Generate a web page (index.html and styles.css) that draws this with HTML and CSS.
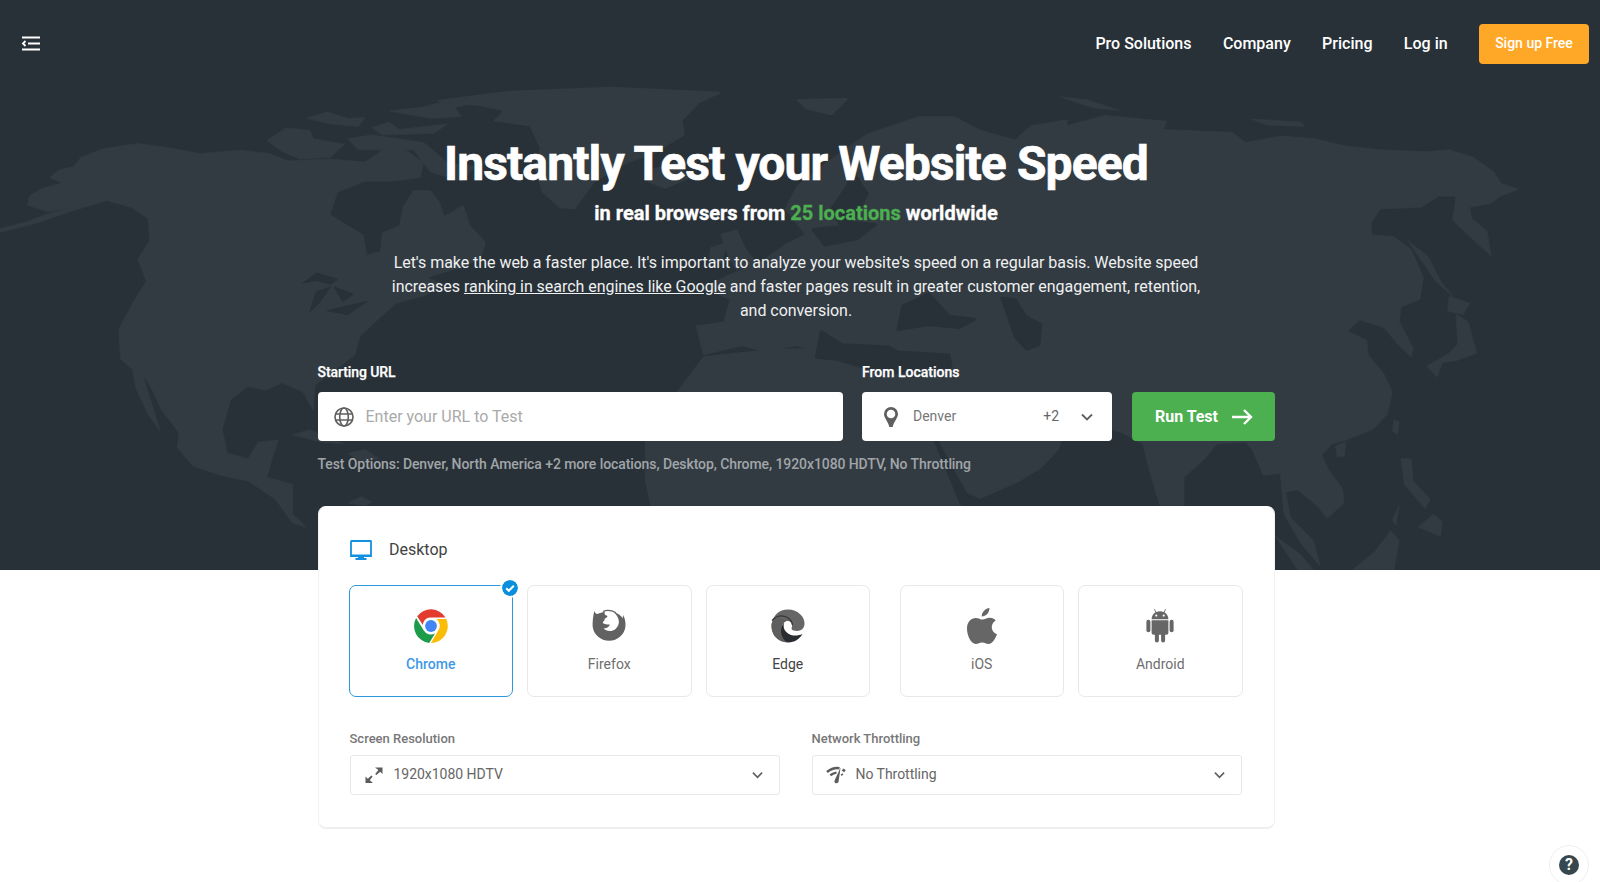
FILE: index.html
```
<!DOCTYPE html>
<html lang="en">
<head>
<meta charset="utf-8">
<title>Instantly Test your Website Speed</title>
<link rel="stylesheet" href="styles.css">
</head>
<body>
<div class="hero">
  <svg class="map" viewBox="0 0 1600 570" aria-hidden="true">
    <!-- North and Central America -->
    <g transform="scale(.3444 .3699)">
      <path class="land" d="M0 618L75 600L150 575L205 560L140 572L80 555L85 530L120 510L180 495L145 480L170 460L215 450L235 425L300 402L400 388L480 398L580 415L700 406L780 415L840 435L960 430L1060 438L1120 400L1170 400L1230 440L1220 480L1140 490L1060 490L980 520L958 580L1010 610L1055 635L1065 690L1105 680L1110 630L1160 610L1170 560L1200 515L1250 515L1275 545L1290 585L1345 555L1365 610L1410 655L1395 700L1330 725L1240 750L1290 770L1230 800L1150 820L1090 870L1045 910L1030 960L960 1010L915 1040L910 1110L880 1060L820 1035L770 1055L720 1045L670 1080L645 1160L660 1225L720 1240L750 1195L808 1190L790 1240L775 1290L850 1310L850 1390L890 1425L850 1415L800 1350L720 1300L640 1285L560 1260L515 1210L520 1170L470 1110L440 1050L415 1015L440 1090L465 1165L430 1120L395 1050L385 1000L350 970L345 890L385 820L425 760L400 700L435 650L430 590L380 560L310 542L210 570L100 605L0 628Z"/>
      <path class="land" d="M775 380L830 346L900 352L910 375L1000 390L960 425L870 430L820 410ZM890 320L950 303L1010 320L1060 318L1040 342L960 335ZM1080 345L1130 330L1160 350L1300 335L1260 360L1110 365ZM1010 375L1080 365L1230 385L1300 440L1380 450L1340 490L1250 465L1200 405L1040 405ZM1225 290L1350 262L1500 245L1440 270L1320 290L1340 315L1250 320L1130 300Z"/>
      <path class="land" d="M850 1175L900 1162L1000 1200L930 1195ZM1010 1225L1060 1215L1100 1240L1050 1250ZM1010 1360L1050 1342L1080 1358L1060 1367Z"/>
      <path class="water" d="M880 765L920 738L980 755L960 768L920 758ZM900 842L918 790L960 775L925 820ZM970 775L1025 795L995 815ZM950 840L1065 815L1010 850Z"/>
    </g>
    <!-- Greenland, Iceland, Europe, Africa, Arabia -->
    <g transform="scale(1.0204)">
      <path class="land" d="M430 99L500 90L600 86L705 91L685 100L668 118L670 132L640 150L612 160L582 178L563 204L549 203L532 188L525 165L530 145L520 123L485 118L495 108L470 103Z"/>
      <path class="land" d="M782 98L830 97L815 112L790 106ZM634 168L662 160L675 174L652 184L636 178ZM707 230L722 226L730 244L741 258L722 264L714 250ZM697 243L711 239L707 257L695 258Z"/>
      <path class="land" d="M770 205L782 182L810 160L850 132L900 115L935 115L960 128L995 138L1010 124L1045 118L1045 415L1037 440L1020 458L997 472L960 488L948 482L925 440L905 400L876 370L855 356L820 350L780 338L750 344L727 338L690 347L683 320L710 316L716 293L690 282L715 270L745 258L770 240L790 230Z"/>
      <path class="land" d="M690 350L755 343L805 342L825 355L880 366L905 410L940 495L955 504L640 504L633 470L633 430L660 390Z"/>
      <path class="water" d="M815 205L832 180L830 160L850 190L835 218L858 220L840 234L808 240L797 225L825 222ZM885 300L910 288L930 310L955 313L940 321L910 318L880 323ZM982 292L995 294L1005 310L1020 318L1018 338L1006 342L995 330ZM805 325L825 338L870 340L880 345L930 348L932 360L870 366L820 352L800 350Z"/>
    </g>
    <!-- Asia and the Pacific -->
    <g transform="translate(1060) scale(.3444 .3699)">
      <path class="land" d="M0 262L80 270L170 298L100 292ZM555 322L700 330L710 342L600 338ZM0 345L130 312L310 328L300 350L500 358L540 385L640 368L740 375L830 395L930 405L1060 410L1130 405L1200 425L1260 465L1280 495L1330 512L1280 530L1250 550L1190 560L1195 590L1240 625L1252 692L1190 640L1140 595L1150 530L1100 530L1050 560L930 565L905 600L905 635L970 640L1020 675L1055 750L1045 810L990 830L985 870L1025 940L1020 965L980 930L940 885L870 865L835 895L890 920L895 960L940 1010L965 1060L950 1120L910 1160L830 1190L790 1200L760 1230L780 1270L820 1320L825 1360L775 1402L750 1370L690 1325L655 1330L670 1400L735 1460L755 1530L700 1470L650 1390L640 1280L590 1285L560 1220L540 1195L455 1200L420 1240L360 1290L360 1367L290 1367L265 1290L240 1200L180 1170L0 1120Z"/>
      <path class="land" d="M1010 650L1070 695L1105 760L1140 800L1090 760ZM1130 800L1190 820L1170 850L1125 840ZM1150 850L1185 870L1210 955L1150 975L1110 980L1095 1020L1065 990L1130 955L1155 930ZM970 1135L985 1140L980 1175L965 1165ZM800 1205L830 1195L825 1235L805 1235ZM990 1240L1020 1240L1025 1300L1075 1350L1060 1375L1000 1310ZM1040 1425L1085 1390L1110 1410L1105 1450ZM625 1450L700 1500L735 1540L690 1540ZM850 1540L915 1490L960 1435L985 1460L970 1540ZM965 1405L985 1365L975 1420Z"/>
    </g>
  </svg>

  <header class="topbar">
    <svg class="menu-icon" viewBox="0 0 20 16"><path d="M1 1.500h18M7 7.500h12M1 13.500h18M4.500 5L2 7.500L4.500 10"/></svg>
    <nav class="nav">
      <a class="nav-link">Pro Solutions</a>
      <a class="nav-link">Company</a>
      <a class="nav-link">Pricing</a>
      <a class="nav-link">Log in</a>
      <a class="signup">Sign up Free</a>
    </nav>
  </header>

  <main class="intro">
    <h1 class="title">Instantly Test your Website Speed</h1>
    <h2 class="subtitle">in real browsers from <span class="green">25 locations</span> worldwide</h2>
    <p class="lead">Let's make the web a faster place. It's important to analyze your website's speed on a regular basis. Website speed<br>increases <a class="lead-link">ranking in search engines like Google</a> and faster pages result in greater customer engagement, retention,<br>and conversion.</p>
  </main>

  <form class="test-form">
    <div class="field field-url">
      <span class="label">Starting URL</span>
      <div class="box url-box">
        <svg class="globe" viewBox="0 0 20 20"><circle cx="10" cy="10" r="9"/><ellipse cx="10" cy="10" rx="4.300" ry="9"/><path d="M1.500 7h17M1.500 13h17"/></svg>
        <span class="placeholder">Enter your URL to Test</span>
      </div>
    </div>
    <div class="field field-loc">
      <span class="label label-loc">From Locations</span>
      <div class="box loc-box">
        <svg class="pin" viewBox="0 0 14 20"><path fill-rule="evenodd" d="M7 0a7 7 0 0 1 7 7c0 4-4.500 8-5.300 13H5.300C4.500 15 0 11 0 7a7 7 0 0 1 7-7Zm0 2.700a4.300 4.300 0 1 0 0 8.600a4.300 4.300 0 0 0 0-8.600Z"/></svg>
        <span class="city">Denver</span>
        <span class="more">+2</span>
        <svg class="chevron" viewBox="0 0 12 8"><path d="M1 1.500l5 5l5-5"/></svg>
      </div>
    </div>
    <div class="run">Run Test
      <svg class="arrow" viewBox="0 0 22 16"><path d="M1 8h19M13 1l7 7l-7 7"/></svg>
    </div>
  </form>
  <p class="summary">Test Options: Denver, North America +2 more locations, Desktop, Chrome, 1920x1080 HDTV, No Throttling</p>
</div>

<section class="card">
  <div class="card-head">
    <svg class="monitor" viewBox="0 0 22 20"><path class="monitor-line" d="M1.500 1h19a.5.5 0 0 1 .5.500V16H1V1.500a.5.5 0 0 1 .5-.5Z"/><path class="monitor-fill" d="M1 14.500h20v2.300H1ZM8 16.500h6v1.500h2.500V20h-11v-2H8Z"/></svg>
    <span>Desktop</span>
  </div>
  <div class="tiles">
    <div class="tile tile-on">
      <svg class="badge" viewBox="0 0 16 16"><circle cx="8" cy="8" r="8" fill="#0a8fdc"/><path d="M4.200 8.200l2.600 2.600l5-5" fill="none" stroke="#fff" stroke-width="2"/></svg>
      <svg class="logo" viewBox="0 0 34 34">
        <path fill="#e33b2e" d="M3.200 7.200A17 17 0 0 1 31.500 8.500H17A8.500 8.500 0 0 0 9.100 13.900L8.800 16Z"/>
        <path fill="#1c9b48" d="M2.100 8.900A17 17 0 0 0 15.200 33.900L21 24.500A8.500 8.500 0 0 1 9.600 21.300Z"/>
        <path fill="#fbbc05" d="M32.300 10A17 17 0 0 1 16.900 34L24.400 21.300A8.500 8.500 0 0 0 22.500 10Z"/>
        <circle cx="17" cy="17" r="7.400" fill="#fff"/><circle cx="17" cy="17" r="5.900" fill="#4285f4"/>
      </svg>
      <span>Chrome</span>
    </div>
    <div class="tile">
      <svg class="logo" viewBox="0 0 34 34"><path fill="#626262" d="M2.300 2C3 4 4 4.800 5.500 5C8 3.500 10 4 13 2.500C12 4.500 12.600 6 14.500 6.600C16.500 7.300 15 8.800 12.600 9.700C13 11.200 12 12 10.700 13C11 15.500 14 15 18 15.800C17 17.500 15 19.800 11.500 19.500C14 22.500 20 23 23.500 20C28.500 15.500 28 9 22 3.500C26 4 29.500 7 30.700 9.500L31 6C33 9 33.700 13 33.500 17A16.500 16 0 0 1 .6 17C.5 12 1.200 6.500 2.300 2Z"/><path fill="none" stroke="#626262" stroke-width="1.200" d="M11 2.500Q17 -.2 24 3.800"/></svg>
      <span>Firefox</span>
    </div>
    <div class="tile tile-edge">
      <svg class="logo" viewBox="0 0 34 34"><path fill="#666" d="M.5 16C2 6 8 .5 17 .5C27 .5 34 8 33.500 15C33.200 21 28 23 22.500 21.500C19.500 20.500 21 19 21 16.500C21 13 18.500 11.500 15.500 12C11 13 9 18 12 24C8 31 12 32 14 33C5 31 0 25 .5 16Z"/><path fill="#5e5e5e" d="M.5 15C2 9 10 7 15.500 12C9 14 8 24 17 33.500C7 34 0 25 .5 15Z"/><path fill="#292d31" d="M13.500 13C11 18 14 24 20 26C24 27 28 26.500 31.500 25C28 31 22 34 16 33.300C9 29 8 18 13.500 13Z"/><path d="M1 11.500Q8 4 16.500 8.500Q21 11.500 21.500 16" fill="none" stroke="#353638" stroke-width="1.300"/></svg>
      <span>Edge</span>
    </div>
    <div class="tile tile-ios">
      <svg class="logo logo-apple" viewBox="0 0 30 36"><path fill="#666" d="M22.400 0C22.700 4.500 18.900 8.400 14.800 8.500C14.400 4.500 18.200.5 22.400 0ZM28.700 12.400C22.600 16.200 24 23.900 30 26.200C28.200 31 25 36 21.500 36C18.700 36 18.100 34.400 15.200 34.400C12.200 34.400 11.300 36 8.800 36C4 36 0 27.500 0 20.500C0 13.700 4.300 9.900 8.700 9.900C11.600 9.900 13.600 11.600 15.500 11.600C17.300 11.600 19.700 9.700 23 9.700C25.100 9.700 27.300 10.500 28.700 12.400Z"/></svg>
      <span>iOS</span>
    </div>
    <div class="tile">
      <svg class="logo logo-android" viewBox="0 0 28 34"><g fill="#666"><path d="M5.600 10.200C5.600 6.800 7.400 4.500 9.500 3.200L8 .5L8.600.1L10.300 2.900Q14 1.500 17.700 2.900L19.400.1L20 .5L18.500 3.200C20.600 4.500 22.400 6.800 22.400 10.200Z"/><path d="M5.600 11.300h16.800v12.400a2 2 0 0 1-2 2h-1.300v5.800a2 2 0 0 1-4 0v-5.800h-2.200v5.800a2 2 0 0 1-4 0v-5.800H7.600a2 2 0 0 1-2-2Z"/><rect x=".4" y="10.800" width="4" height="12.500" rx="2"/><rect x="23.600" y="10.800" width="4" height="12.500" rx="2"/></g><circle cx="10.300" cy="6.600" r="1.100" fill="#fff"/><circle cx="17.700" cy="6.600" r="1.100" fill="#fff"/></svg>
      <span>Android</span>
    </div>
  </div>
  <div class="options">
    <div class="option">
      <span class="option-label">Screen Resolution</span>
      <div class="select">
        <svg class="option-icon" viewBox="0 0 20 18"><path fill="#5c5c5c" d="M11 1.500h7.500v6.500L16.200 5.800L12.400 9L11.200 7.900L14.400 4ZM9 17H1.500v-6.500L3.800 12.700L7.400 9.500L8.600 10.600L5.800 14.300Z"/></svg>
        <span>1920x1080 HDTV</span>
        <svg class="chevron chevron-sm" viewBox="0 0 12 8"><path d="M1 1.500l5 5l5-5"/></svg>
      </div>
    </div>
    <div class="option">
      <span class="option-label">Network Throttling</span>
      <div class="select">
        <svg class="option-icon" viewBox="0 0 20 18"><g fill="none" stroke="#5c5c5c"><path stroke-width="2.600" d="M1 6Q7 1.200 13.500 2.200M16.500 3.600L19 5.200"/><path stroke-width="2.300" d="M4.300 9.300Q7.500 7 10.500 6.600M15.500 8L16.500 9.200"/></g><path fill="#5c5c5c" d="M14.600 1.500L12.500 16Q11 18.200 9 16.800Q8 15.600 8.800 14Z"/></svg>
        <span>No Throttling</span>
        <svg class="chevron chevron-sm" viewBox="0 0 12 8"><path d="M1 1.500l5 5l5-5"/></svg>
      </div>
    </div>
  </div>
</section>

<div class="help">
  <span class="help-dot">?</span>
</div>
</body>
</html>
```
FILE: styles.css
```
* { box-sizing: border-box; }
body { margin: 0; height: 882px; overflow: hidden; background: #fff; font-family: Roboto, "Liberation Sans", sans-serif; color: #666; }
h1, h2, p { margin: 0; }

.hero { position: relative; height: 570px; background: #293138; color: #fff; }
.map { position: absolute; inset: 0; width: 1600px; height: 570px; }
.land { fill: #333b42; stroke: #333b42; stroke-width: 2; stroke-linejoin: round; }
.water { fill: #293138; stroke: #293138; stroke-width: 3; stroke-linejoin: round; }
.topbar, .intro, .test-form, .summary { position: relative; }

.topbar { display: flex; justify-content: space-between; align-items: center; height: 88px; padding: 0 11px 0 21px; }
.menu-icon { width: 20px; height: 16px; fill: none; stroke: #fff; stroke-width: 1.9; }
.nav { display: flex; align-items: center; }
.nav-link { margin-right: 31.4px; padding-bottom: 1px; font-size: 16px; font-weight: 500; line-height: 20px; white-space: nowrap; }
.signup { width: 110px; height: 40px; border-radius: 4px; background: #ffa726; font-size: 14px; font-weight: 500; line-height: 38px; text-align: center; }

.intro { width: 960px; margin-left: 316px; padding-top: 44px; text-align: center; }
.title { font-size: 48px; font-weight: 700; line-height: 64px; letter-spacing: -.88px; -webkit-text-stroke: .7px #fff; white-space: nowrap; }
.subtitle { margin-top: 2px; font-size: 20px; font-weight: 700; line-height: 30px; -webkit-text-stroke: .3px; }
.green { color: #4caf50; }
.lead { margin-top: 23px; font-size: 16px; line-height: 24px; letter-spacing: -.04px; color: #eef0f1; white-space: nowrap; }
.lead-link { text-decoration: underline; }

.test-form { display: flex; align-items: flex-end; gap: 19.5px; margin: 39px 0 0 317.5px; width: 957px; }
.field { display: flex; flex-direction: column; gap: 10px; }
.field-url { width: 525px; }
.field-loc { width: 250px; }
.label { font-size: 14px; font-weight: 500; line-height: 20px; letter-spacing: -.08px; -webkit-text-stroke: .25px; }
.label-loc { letter-spacing: 0; }
.box { display: flex; align-items: center; height: 49px; border-radius: 4px; background: #fff; color: #666; }
.url-box { padding-left: 16px; }
.globe { width: 20px; height: 20px; fill: none; stroke: #5f5f5f; stroke-width: 1.6; }
.placeholder { margin-left: 12px; padding-bottom: 1px; font-size: 16px; color: #aaa; }
.loc-box { padding: 0 19px 0 22px; font-size: 14px; }
.pin { width: 14px; height: 20px; fill: #5f5f5f; }
.city { margin-left: 15px; padding-bottom: 2px; color: #777; }
.more { margin-left: auto; padding-bottom: 2px; }
.chevron { width: 12px; height: 8px; margin-left: 22px; fill: none; stroke: #5f5f5f; stroke-width: 1.8; }
.run { display: flex; align-items: center; justify-content: center; gap: 13px; flex: 1; height: 49px; padding-left: 2px; border-radius: 4px; background: #4caf50; font-size: 16px; font-weight: 700; letter-spacing: -.05px; }
.arrow { width: 22px; height: 16px; fill: none; stroke: #fff; stroke-width: 2.4; }
.summary { margin: 13px 0 0 317.500px; font-size: 14px; font-weight: 500; line-height: 20px; letter-spacing: -.085px; color: #a0a5a9; white-space: nowrap; }

.card { position: relative; width: 957px; height: 323px; margin: -64px 0 0 318px; padding: 31px 30px 0; border: 1px solid #f1f1f1; border-top-color: #fff; border-bottom: 2px solid #eee; border-radius: 8px; background: #fff; }
.card-head { display: flex; align-items: center; gap: 17px; height: 22px; padding-left: 1px; font-size: 16px; color: #424242; }
.monitor { width: 22px; height: 20px; margin-top: 1px; }
.monitor-line { fill: none; stroke: #1490e0; stroke-width: 1.8; }
.monitor-fill { fill: #1490e0; }
.tiles { display: flex; gap: 14px; margin-top: 25px; }
.tile { position: relative; display: flex; flex-direction: column; align-items: center; flex: 0 0 164.5px; height: 112px; padding-top: 23px; border: 1px solid #e8e8e8; border-radius: 7px; font-size: 14px; line-height: 20px; color: #6e6e6e; }
.tile-on { border-color: #2b98dc; color: #3f98e6; font-weight: 500; }
.tile-edge { color: #444; }
.tile-ios { margin-left: 15.5px; }
.badge { position: absolute; top: -6px; right: -6px; width: 16px; height: 16px; border-radius: 50%; box-shadow: 0 0 0 2px #fff; }
.logo { width: 34px; height: 34px; margin-bottom: 11px; }
.logo-apple { width: 30px; height: 36px; margin-top: -1px; margin-bottom: 10px; }
.logo-android { width: 28px; }
.tiles { margin-left: -.5px; }
.options { display: flex; gap: 32px; margin-top: 32px; padding-left: .5px; }
.option { width: 430px; }
.option-label { display: block; font-size: 13px; font-weight: 500; line-height: 20px; color: #777; }
.select { display: flex; align-items: center; height: 40px; margin-top: 6px; padding: 0 16px 2px 13px; border: 1px solid #e8e8e8; border-radius: 3px; font-size: 14px; letter-spacing: -.03px; }
.option-icon { width: 20px; height: 18px; margin-top: 1px; margin-right: 10px; }
.chevron-sm { width: 11px; height: 8px; margin-left: auto; margin-top: 2px; }

.help { position: fixed; left: 1549px; top: 845px; display: flex; align-items: center; justify-content: center; width: 40px; height: 40px; border: 1px solid #eee; border-radius: 50%; background: #fff; }
.help-dot { width: 20px; height: 20px; border-radius: 50%; background: #37474f; color: #fff; font-size: 16px; font-weight: 700; line-height: 20px; text-align: center; }
```
